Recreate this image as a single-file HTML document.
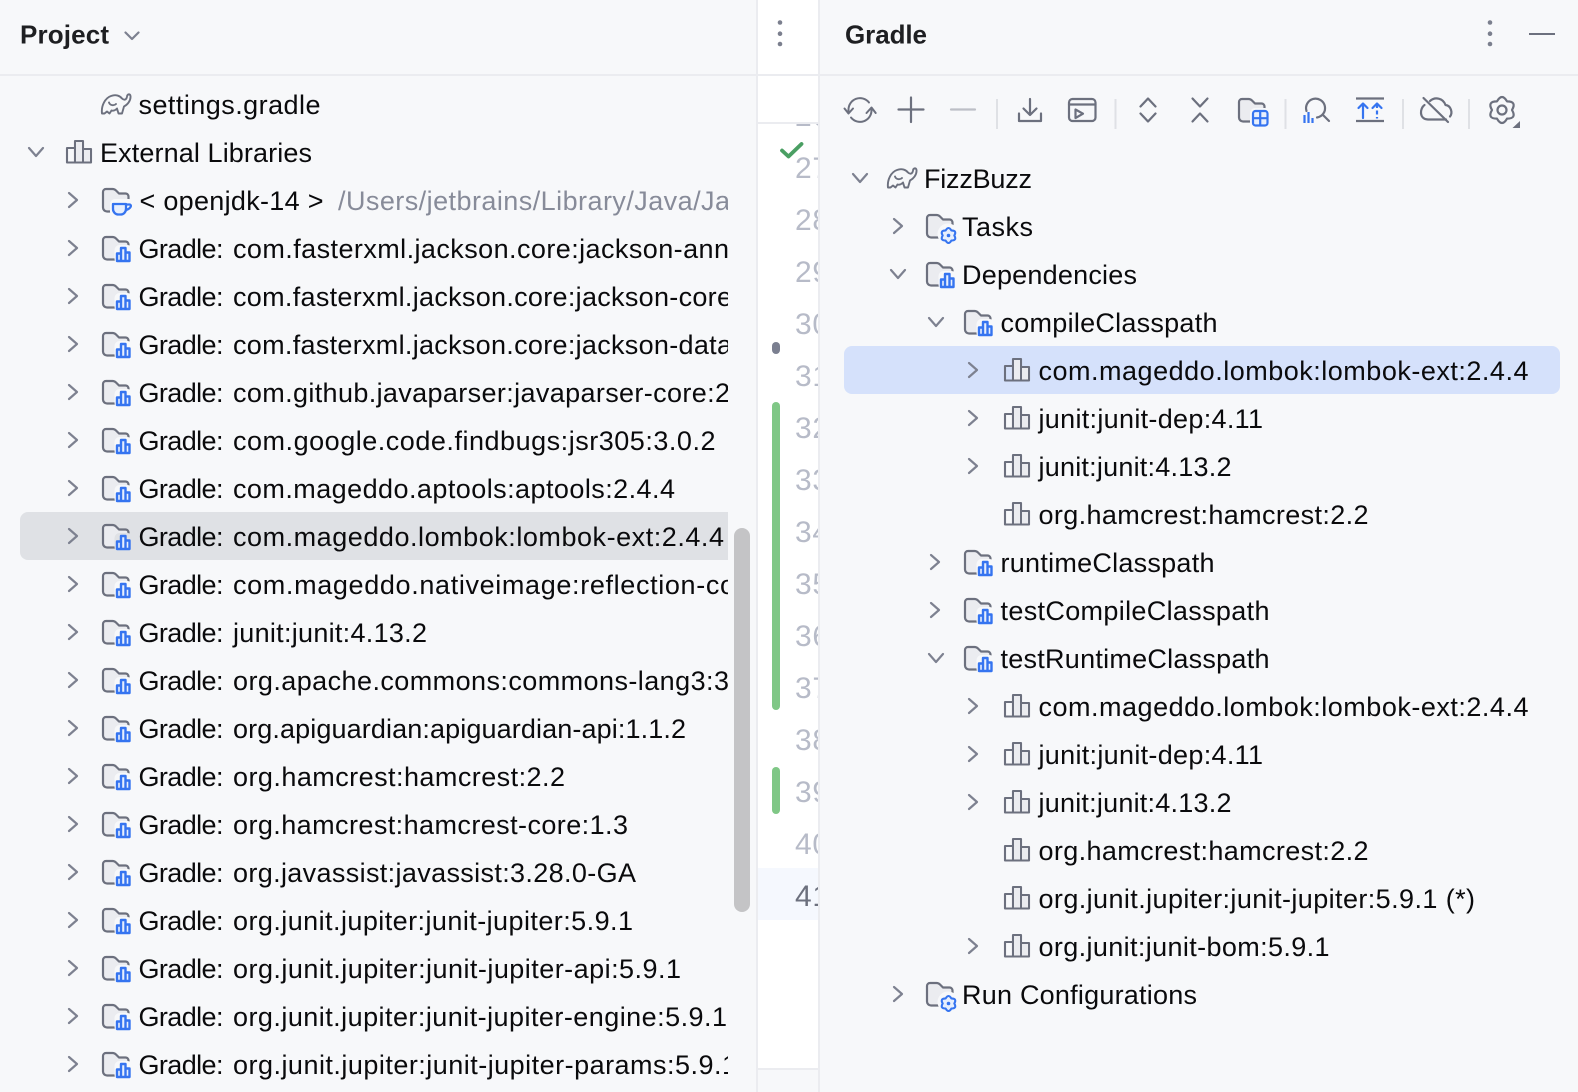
<!DOCTYPE html>
<html><head><meta charset="utf-8"><style>
html,body{margin:0;padding:0;background:#f7f8fa;width:1578px;height:1092px;overflow:hidden}
svg{display:block;position:absolute;left:0;top:0}
text{font-family:"Liberation Sans",sans-serif;font-size:27px;fill:#0a0a0c}
.h{font-weight:bold;font-size:26px;fill:#1e1f22}
.g{fill:#878b99}
.n{font-size:30px;fill:#b7bbc8}
.chev{fill:none;stroke:#7d8190;stroke-width:2.2;stroke-linecap:round;stroke-linejoin:round}
.i{fill:none;stroke:#6c707e;stroke-width:2.2;stroke-linecap:round;stroke-linejoin:round}
.b{fill:none;stroke:#3574f0;stroke-width:2.2;stroke-linecap:round;stroke-linejoin:round}
</style></head><body>
<svg width="1578" height="1092" viewBox="0 0 1578 1092" xmlns="http://www.w3.org/2000/svg">
<defs>
<clipPath id="lc"><rect x="0" y="76" width="728" height="1016"/></clipPath>
<clipPath id="ed"><rect x="758" y="124" width="60" height="944"/></clipPath>
<path id="cr" class="chev" d="M-4-7 L4 0 L-4 7"/>
<path id="cd" class="chev" d="M-7-4 L0 4 L7-4"/>
<g id="folder">
<path d="M20 23.500H5a4 4 0 0 1-4-4V4a3 3 0 0 1 3-3h6.500c1.500 0 2.500.5 3.500 1.500l3 3h6.500a3 3 0 0 1 3 3V12" fill="#ebecf0" stroke="#6c707e" stroke-width="2.200" stroke-linejoin="round" stroke-linecap="round"/>
</g>
<g id="badgeLib">
<rect x="12.500" y="9" width="18" height="19" rx="5" style="fill:var(--bg,#f7f8fa)"/>
<path d="M15 25V17.500H19V25ZM19 25V12H23.500V25ZM23.500 25V16.500H27.500V25Z M15 25H27.500" fill="#e7effd" stroke="#3574f0" stroke-width="2.400" stroke-linejoin="round"/>
</g>
<g id="fl"><use href="#folder"/><use href="#badgeLib"/></g>
<g id="badgeGear">
<circle cx="22" cy="20" r="10.500" style="fill:var(--bg,#f7f8fa)"/>
<path transform="translate(22.500 21.500)" d="M-2.900-5.020Q0-10 2.900-5.020Q8.700-5 5.800 0Q8.700 5 2.900 5.020Q0 10-2.900 5.020Q-8.700 5-5.800 0Q-8.700-5-2.900-5.020Z" fill="#e7effd" stroke="#3574f0" stroke-width="2.100" stroke-linejoin="round"/>
<circle cx="22.500" cy="21.500" r="1.800" fill="#3574f0"/>
</g>
<g id="fg"><use href="#folder"/><use href="#badgeGear"/></g>
<g id="lib">
<path d="M1 22.500V8H9V22.500ZM9 22.500V1H17V22.500ZM17 22.500V9H25V22.500Z" fill="none" stroke="#6c707e" stroke-width="2.100" stroke-linejoin="round"/>
<path d="M10 21.500V2H16V21.500ZM18 21.500V10H24V21.500Z" fill="#ebecf0"/>
</g>
<path id="ele" d="M1 20.500C0 13 4 5 10 3C15 1 19 3 21 5.500C23 7.500 25.500 7 26 3.500C26.300 1 29 .5 29.500 3C30 8 26 12 23 13.500L21 20.500H17.500L16 15.500C14 17.500 12 18 10.500 17.500L8.500 20.500L6 18.500L3.500 20.500Z M8 9.500C9 12.500 13 13 15 11" fill="none" stroke="#6c707e" stroke-width="1.900" stroke-linejoin="round" stroke-linecap="round"/>
</defs>

<rect width="1578" height="1092" fill="#f7f8fa"/>
<rect x="758" y="0" width="60" height="1068" fill="#fff"/>
<rect x="758" y="868" width="60" height="52" fill="#f5f8fe"/>
<rect x="0" y="74" width="1578" height="2" fill="#ebecf0"/>
<rect x="758" y="122" width="60" height="2" fill="#ebecf0"/>
<rect x="758" y="1068" width="60" height="2" fill="#ebecf0"/>
<rect x="756" y="0" width="2" height="1092" fill="#ebecf0"/>
<rect x="818" y="0" width="2" height="1092" fill="#ebecf0"/>

<!-- Project header -->
<text class="h" x="20" y="43.500" textLength="89">Project</text>
<path class="chev" d="M125.500 32.500L132 39L138.500 32.500"/>
<circle cx="780" cy="22.500" r="2.300" fill="#7b7f8e"/><circle cx="780" cy="33.700" r="2.300" fill="#7b7f8e"/><circle cx="780" cy="44" r="2.300" fill="#7b7f8e"/>

<!-- Selected row left -->
<g clip-path="url(#lc)"><rect x="20" y="512" width="730" height="48" rx="8" fill="#dfe1e5"/></g>
<rect x="734" y="528" width="16" height="384" rx="8" fill="#c4c4c6"/>

<!-- Left tree -->
<use href="#ele" x="101" y="93"/>
<text x="138.500" y="114" textLength="182">settings.gradle</text>
<use href="#cd" x="36" y="152"/>
<use href="#lib" x="66" y="140"/>
<text x="100" y="162" textLength="212">External Libraries</text>

<g clip-path="url(#lc)">
<use href="#cr" x="73" y="200"/>
<use href="#folder" x="102" y="188"/>
<rect x="110" y="199" width="24" height="18" rx="5" fill="#f7f8fa"/>
<path d="M113 204H126V209a5.500 5.500 0 0 1-5.500 5.500h-2A5.500 5.500 0 0 1 113 209Z" fill="#e7effd" stroke="#3574f0" stroke-width="2.300" stroke-linejoin="round"/>
<path d="M126 204.500h3.500c2 0 2.500 3.500-3.500 5.500" fill="none" stroke="#3574f0" stroke-width="2.300" stroke-linecap="round"/>
<text x="139.500" y="210" textLength="184">&lt; openjdk-14 &gt;</text>
<text class="g" x="338" y="210" textLength="392">/Users/jetbrains/Library/Java/Ja</text>

<use href="#cr" x="73" y="248"/><use href="#fl" x="102" y="236"/><text x="138.500" y="258" textLength="85">Gradle:</text><text x="233" y="258" textLength="496">com.fasterxml.jackson.core:jackson-ann</text>
<use href="#cr" x="73" y="296"/><use href="#fl" x="102" y="284"/><text x="138.500" y="306" textLength="85">Gradle:</text><text x="233" y="306" textLength="499">com.fasterxml.jackson.core:jackson-core</text>
<use href="#cr" x="73" y="344"/><use href="#fl" x="102" y="332"/><text x="138.500" y="354" textLength="85">Gradle:</text><text x="233" y="354" textLength="499">com.fasterxml.jackson.core:jackson-data</text>
<use href="#cr" x="73" y="392"/><use href="#fl" x="102" y="380"/><text x="138.500" y="402" textLength="85">Gradle:</text><text x="233" y="402" textLength="497">com.github.javaparser:javaparser-core:2</text>
<use href="#cr" x="73" y="440"/><use href="#fl" x="102" y="428"/><text x="138.500" y="450" textLength="85">Gradle:</text><text x="233" y="450" textLength="482.500">com.google.code.findbugs:jsr305:3.0.2</text>
<use href="#cr" x="73" y="488"/><use href="#fl" x="102" y="476"/><text x="138.500" y="498" textLength="85">Gradle:</text><text x="233" y="498" textLength="442">com.mageddo.aptools:aptools:2.4.4</text>
<use href="#cr" x="73" y="536"/><use href="#fl" x="102" y="524" style="--bg:#dfe1e5"/><text x="138.500" y="546" textLength="85">Gradle:</text><text x="233" y="546" textLength="491">com.mageddo.lombok:lombok-ext:2.4.4</text>
<use href="#cr" x="73" y="584"/><use href="#fl" x="102" y="572"/><text x="138.500" y="594" textLength="85">Gradle:</text><text x="233" y="594" textLength="502">com.mageddo.nativeimage:reflection-co</text>
<use href="#cr" x="73" y="632"/><use href="#fl" x="102" y="620"/><text x="138.500" y="642" textLength="85">Gradle:</text><text x="233" y="642" textLength="194">junit:junit:4.13.2</text>
<use href="#cr" x="73" y="680"/><use href="#fl" x="102" y="668"/><text x="138.500" y="690" textLength="85">Gradle:</text><text x="233" y="690" textLength="496">org.apache.commons:commons-lang3:3</text>
<use href="#cr" x="73" y="728"/><use href="#fl" x="102" y="716"/><text x="138.500" y="738" textLength="85">Gradle:</text><text x="233" y="738" textLength="453">org.apiguardian:apiguardian-api:1.1.2</text>
<use href="#cr" x="73" y="776"/><use href="#fl" x="102" y="764"/><text x="138.500" y="786" textLength="85">Gradle:</text><text x="233" y="786" textLength="332">org.hamcrest:hamcrest:2.2</text>
<use href="#cr" x="73" y="824"/><use href="#fl" x="102" y="812"/><text x="138.500" y="834" textLength="85">Gradle:</text><text x="233" y="834" textLength="395">org.hamcrest:hamcrest-core:1.3</text>
<use href="#cr" x="73" y="872"/><use href="#fl" x="102" y="860"/><text x="138.500" y="882" textLength="85">Gradle:</text><text x="233" y="882" textLength="403">org.javassist:javassist:3.28.0-GA</text>
<use href="#cr" x="73" y="920"/><use href="#fl" x="102" y="908"/><text x="138.500" y="930" textLength="85">Gradle:</text><text x="233" y="930" textLength="400">org.junit.jupiter:junit-jupiter:5.9.1</text>
<use href="#cr" x="73" y="968"/><use href="#fl" x="102" y="956"/><text x="138.500" y="978" textLength="85">Gradle:</text><text x="233" y="978" textLength="448">org.junit.jupiter:junit-jupiter-api:5.9.1</text>
<use href="#cr" x="73" y="1016"/><use href="#fl" x="102" y="1004"/><text x="138.500" y="1026" textLength="85">Gradle:</text><text x="233" y="1026" textLength="494">org.junit.jupiter:junit-jupiter-engine:5.9.1</text>
<use href="#cr" x="73" y="1064"/><use href="#fl" x="102" y="1052"/><text x="138.500" y="1074" textLength="85">Gradle:</text><text x="233" y="1074" textLength="504">org.junit.jupiter:junit-jupiter-params:5.9.1</text>
</g>

<!-- Editor gutter -->
<g clip-path="url(#ed)">
<text class="n" x="795" y="126" textLength="34">26</text>
<text class="n" x="795" y="178" textLength="34">27</text>
<text class="n" x="795" y="230" textLength="34">28</text>
<text class="n" x="795" y="282" textLength="34">29</text>
<text class="n" x="795" y="334" textLength="34">30</text>
<text class="n" x="795" y="386" textLength="34">31</text>
<text class="n" x="795" y="438" textLength="34">32</text>
<text class="n" x="795" y="490" textLength="34">33</text>
<text class="n" x="795" y="542" textLength="34">34</text>
<text class="n" x="795" y="594" textLength="34">35</text>
<text class="n" x="795" y="646" textLength="34">36</text>
<text class="n" x="795" y="698" textLength="34">37</text>
<text class="n" x="795" y="750" textLength="34">38</text>
<text class="n" x="795" y="802" textLength="34">39</text>
<text class="n" x="795" y="854" textLength="34">40</text>
<text class="n" style="fill:#6c707e" x="795" y="906" textLength="34">41</text>
</g>
<path d="M782 150.500L788.500 156.500L801.500 144" fill="none" stroke="#4a9f63" stroke-width="3.800" stroke-linecap="round" stroke-linejoin="round"/>
<rect x="772" y="342" width="8" height="12" rx="4" fill="#7b7f90"/>
<rect x="772" y="402" width="8" height="308" rx="4" fill="#7fc786"/>
<rect x="772" y="767" width="8" height="47" rx="4" fill="#7fc786"/>

<!-- Gradle header -->
<text class="h" x="845" y="43.500" textLength="82">Gradle</text>
<circle cx="1490" cy="22.500" r="2.300" fill="#7b7f8e"/><circle cx="1490" cy="33.700" r="2.300" fill="#7b7f8e"/><circle cx="1490" cy="44" r="2.300" fill="#7b7f8e"/>
<rect x="1529" y="33" width="26" height="2" fill="#6c707e"/>

<!-- Toolbar -->
<path class="i" style="stroke-width:2" d="M848.500 113V110A11.500 11.500 0 0 1 869 102.500M871.500 108V110A11.500 11.500 0 0 1 851 117.500M844.500 108.500L848.500 113.500L853 108.500M866.500 113L871.500 107.500L875.700 113"/>
<path class="i" d="M911 97.500V122M898.500 109.500H923.500"/>
<path d="M951 109.500H975" stroke="#bdbfc6" stroke-width="2.200" stroke-linecap="round" fill="none"/>
<rect x="996" y="99" width="2" height="30" fill="#dfe1e5"/>
<path class="i" d="M1030 99V114.500M1023.500 108.500L1030 115L1036.500 108.500M1019 113.500V121H1041V113.500"/>
<rect x="1069" y="99" width="26.500" height="22" rx="3.500" class="i"/>
<path class="i" d="M1069 104.500H1095.500M1075.500 109.500V118L1083 113.700Z"/>
<rect x="1114.500" y="99" width="2" height="30" fill="#dfe1e5"/>
<path class="i" d="M1140.500 106.500L1148 98.500L1155.500 106.500M1140.500 113.500L1148 121.500L1155.500 113.500"/>
<path class="i" d="M1192.500 98.500L1200 106.500L1207.500 98.500M1192.500 121.500L1200 113.500L1207.500 121.500"/>
<use href="#folder" x="1238" y="98"/>
<rect x="1250" y="108" width="20" height="20" rx="5" fill="#f7f8fa"/>
<rect x="1253" y="111" width="14.500" height="14.500" rx="2.500" fill="#e7effd" stroke="#3574f0" stroke-width="2.200"/>
<path d="M1260.200 111V125.500M1253 118.200H1267.500" stroke="#3574f0" stroke-width="2.200" fill="none"/>
<rect x="1284.500" y="99" width="2" height="30" fill="#dfe1e5"/>
<path class="i" d="M1306.500 111A9.500 9.500 0 1 1 1317 117.500M1323 115L1329 121"/>
<path d="M1304.500 115V123M1308.500 112V123M1312.500 118V123" stroke="#3574f0" stroke-width="2.200" fill="none"/>
<rect x="1402" y="99" width="2" height="30" fill="#dfe1e5"/>
<path d="M1356 98.500H1384M1356 121H1384" stroke="#6c707e" stroke-width="2.200" fill="none"/>
<path class="b" d="M1363 104V118M1358.500 108L1363 103.500L1367.500 108M1372.500 108L1377 103.500L1381.500 108"/>
<path d="M1377 104V118.500" stroke="#3574f0" stroke-width="2.200" stroke-dasharray="4 2.500" fill="none"/>
<path class="i" d="M1424.500 105C1420 108 1418.500 119 1428 119.500H1446M1430 101C1435 96.500 1443 98 1445.500 105C1451 105.500 1453 113 1450 116.500"/>
<path class="i" d="M1423.500 98L1448 122"/>
<rect x="1468" y="99" width="2" height="30" fill="#dfe1e5"/>
<path class="i" transform="translate(1502 110)" d="M-5-8.660Q0-17.300 5-8.660Q15-8.650 10 0Q15 8.650 5 8.660Q0 17.300-5 8.660Q-15 8.650-10 0Q-15-8.650-5-8.660Z"/>
<circle class="i" cx="1502" cy="110" r="4.500"/>
<path d="M1520 121V128H1512.500Z" fill="#6c707e"/>

<!-- Gradle tree -->
<rect x="844" y="346" width="716" height="48" rx="8" fill="#d5e1fb"/>
<use href="#cd" x="860" y="178"/>
<use href="#ele" x="887" y="167"/>
<text x="924" y="188" textLength="108">FizzBuzz</text>

<use href="#cr" x="898" y="226"/><use href="#fg" x="926" y="214"/>
<text x="962" y="236" textLength="71">Tasks</text>
<use href="#cd" x="898" y="274"/><use href="#fl" x="926" y="262"/>
<text x="962" y="284" textLength="175">Dependencies</text>
<use href="#cd" x="936" y="322"/><use href="#fl" x="964" y="310"/>
<text x="1000.500" y="332" textLength="217">compileClasspath</text>

<use href="#cr" x="973" y="370"/><use href="#lib" x="1004" y="358"/>
<text x="1038.500" y="380" textLength="490">com.mageddo.lombok:lombok-ext:2.4.4</text>
<use href="#cr" x="973" y="418"/><use href="#lib" x="1004" y="406"/>
<text x="1038.500" y="428" textLength="224.500">junit:junit-dep:4.11</text>
<use href="#cr" x="973" y="466"/><use href="#lib" x="1004" y="454"/>
<text x="1038.500" y="476" textLength="193">junit:junit:4.13.2</text>
<use href="#lib" x="1004" y="502"/>
<text x="1038.500" y="524" textLength="330">org.hamcrest:hamcrest:2.2</text>

<use href="#cr" x="935" y="562"/><use href="#fl" x="964" y="550"/>
<text x="1000.500" y="572" textLength="214">runtimeClasspath</text>
<use href="#cr" x="935" y="610"/><use href="#fl" x="964" y="598"/>
<text x="1000.500" y="620" textLength="269">testCompileClasspath</text>
<use href="#cd" x="936" y="658"/><use href="#fl" x="964" y="646"/>
<text x="1000.500" y="668" textLength="269">testRuntimeClasspath</text>

<use href="#cr" x="973" y="706"/><use href="#lib" x="1004" y="694"/>
<text x="1038.500" y="716" textLength="490">com.mageddo.lombok:lombok-ext:2.4.4</text>
<use href="#cr" x="973" y="754"/><use href="#lib" x="1004" y="742"/>
<text x="1038.500" y="764" textLength="224.500">junit:junit-dep:4.11</text>
<use href="#cr" x="973" y="802"/><use href="#lib" x="1004" y="790"/>
<text x="1038.500" y="812" textLength="193">junit:junit:4.13.2</text>
<use href="#lib" x="1004" y="838"/>
<text x="1038.500" y="860" textLength="330">org.hamcrest:hamcrest:2.2</text>
<use href="#lib" x="1004" y="886"/>
<text x="1038.500" y="908" textLength="436.500">org.junit.jupiter:junit-jupiter:5.9.1 (*)</text>
<use href="#cr" x="973" y="946"/><use href="#lib" x="1004" y="934"/>
<text x="1038.500" y="956" textLength="291">org.junit:junit-bom:5.9.1</text>

<use href="#cr" x="898" y="994"/><use href="#fg" x="926" y="982"/>
<text x="962" y="1004" textLength="235">Run Configurations</text>
</svg>
</body></html>
